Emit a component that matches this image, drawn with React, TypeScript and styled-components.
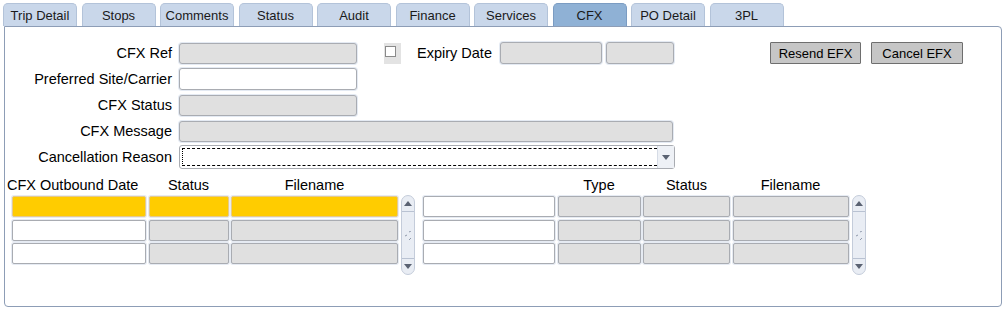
import { Fragment } from "react";
import styled, { createGlobalStyle } from "styled-components";

const GlobalStyle = createGlobalStyle`
  body {
    margin: 0;
    background: #ffffff;
    font-family: "Liberation Sans", Arial, sans-serif;
    color: #000;
  }
`;

const Page = styled.div`
  width: 1006px;
  height: 310px;
  padding-top: 3px;
  box-sizing: border-box;
`;

const TabBar = styled.div`
  display: flex;
  gap: 4.5px;
  padding-left: 3px;
  height: 23px;
`;

const Tab = styled.div<{ $active?: boolean }>`
  width: 74px;
  height: 23px;
  box-sizing: border-box;
  display: flex;
  align-items: center;
  justify-content: center;
  font-size: 13px;
  color: #1a1a1a;
  background: ${(p) => (p.$active ? "#8fb1d5" : "#c9d7ea")};
  border: 1px solid ${(p) => (p.$active ? "#7b9cc2" : "#b3c3d9")};
  border-bottom: none;
  border-radius: 5px 5px 0 0;
`;

const Panel = styled.div`
  margin-left: 4px;
  width: 998px;
  height: 281px;
  box-sizing: border-box;
  border: 1px solid #8d9db6;
  border-radius: 0 4px 4px 4px;
  padding-top: 15px;
`;

const Form = styled.div`
  display: flex;
  flex-direction: column;
  gap: 4px;
`;

const Row = styled.div`
  display: flex;
  align-items: center;
  height: 22px;
`;

const Label = styled.div`
  width: 167px;
  padding-right: 7px;
  text-align: right;
  font-size: 14.5px;
  white-space: nowrap;
`;

const Field = styled.div<{ $w: number; $gray?: boolean; $h?: number }>`
  width: ${(p) => p.$w}px;
  height: ${(p) => p.$h ?? 21}px;
  box-sizing: border-box;
  background: ${(p) => (p.$gray ? "#e0e0e0" : "#ffffff")};
  border: 1px solid #a9acb2;
  border-radius: 3px;
  box-shadow: 0 0 0 1px #e4eaf3;
  flex-shrink: 0;
`;

const CheckWrap = styled.div`
  margin-left: 27px;
  width: 17px;
  height: 21px;
  background: #e3e3e3;
  display: flex;
  align-items: flex-start;
  padding: 3px 0 0 1px;
  box-sizing: border-box;
`;

const CheckBox = styled.div`
  width: 11px;
  height: 11px;
  background: #fff;
  border: 1px solid #8a8a8a;
  box-sizing: border-box;
`;

const SideLabel = styled.div`
  margin-left: 16px;
  width: 83px;
  font-size: 14.5px;
`;

const Buttons = styled.div`
  margin-left: 96px;
  display: flex;
  gap: 10px;
`;

const Button = styled.div<{ $w: number }>`
  width: ${(p) => p.$w}px;
  height: 22px;
  box-sizing: border-box;
  background: #c6c6c6;
  border: 1px solid #6e6e6e;
  border-radius: 1px;
  display: flex;
  align-items: center;
  justify-content: center;
  font-size: 13px;
`;

const Select = styled.div`
  width: 496px;
  height: 24px;
  box-sizing: border-box;
  border: 1px solid #a9acb2;
  border-radius: 3px;
  background: #fff;
  display: flex;
  padding: 2px 0 2px 2px;
`;

const SelectFocus = styled.div`
  flex: 1;
  border: 1px dashed #000;
  border-width: 1px 0;
  border-left: 1px dotted #000;
`;

const SelectArrow = styled.div`
  width: 16px;
  margin: -2px 0;
  background: #eef1f6;
  border-left: 1px solid #d6dce6;
  display: flex;
  align-items: center;
  justify-content: center;
  svg {
    display: block;
  }
`;

const Tables = styled.div`
  display: flex;
  margin-top: 6px;
`;

const Block = styled.div<{ $left: number }>`
  margin-left: ${(p) => p.$left}px;
  display: flex;
  flex-direction: column;
`;

const HeaderRow = styled.div<{ $cols: string }>`
  display: grid;
  grid-template-columns: ${(p) => p.$cols};
  column-gap: 2.5px;
  font-size: 14.5px;
  height: 21px;
`;

const HeadCell = styled.div<{ $shift?: number }>`
  text-align: ${(p) => (p.$shift ? "left" : "center")};
  margin-left: ${(p) => p.$shift ?? 0}px;
  white-space: nowrap;
  line-height: 18px;
  padding-top: 2px;
`;

const Body = styled.div`
  display: flex;
  align-items: flex-start;
  gap: 3px;
`;

const Grid = styled.div<{ $cols: string }>`
  display: grid;
  grid-template-columns: ${(p) => p.$cols};
  align-content: start;
  column-gap: 2.5px;
  row-gap: 2.5px;
  padding-top: 1px;
`;

const Cell = styled.div<{ $kind: "white" | "gray" | "yellow" }>`
  height: 21px;
  box-sizing: border-box;
  border-radius: 2px;
  background: ${(p) =>
    p.$kind === "yellow" ? "#ffcc00" : p.$kind === "gray" ? "#e0e0e0" : "#ffffff"};
  border: 1px solid ${(p) => (p.$kind === "yellow" ? "#e6c98a" : "#a9acb2")};
  box-shadow: 0 0 0 1px #e6ebf3;
`;

const Scroll = styled.div`
  width: 14px;
  height: 80px;
  box-sizing: border-box;
  background: #e9edf4;
  border: 1px solid #c4ccda;
  border-radius: 7px;
  display: flex;
  flex-direction: column;
  justify-content: space-between;
  align-items: center;
`;

const ScrollBtn = styled.div<{ $down?: boolean }>`
  width: 12px;
  height: 16px;
  display: flex;
  align-items: center;
  justify-content: center;
  border-${(p) => (p.$down ? "top" : "bottom")}: 1px solid #b9c2d2;
  box-sizing: border-box;
`;

const Arrow = ({ up }: { up?: boolean }) => (
  <svg width="8" height="5" viewBox="0 0 8 5">
    <polygon points={up ? "0,5 8,5 4,0" : "0,0 8,0 4,5"} fill="#5a6272" />
  </svg>
);

const Grip = () => (
  <svg width="8" height="9" viewBox="0 0 8 9">
    <line x1="5" y1="1" x2="7" y2="0" stroke="#8e98aa" strokeWidth="1" />
    <line x1="1" y1="5" x2="3" y2="4" stroke="#8e98aa" strokeWidth="1" />
    <line x1="5" y1="9" x2="7" y2="7" stroke="#8e98aa" strokeWidth="1" />
  </svg>
);

const Scrollbar = () => (
  <Scroll>
    <ScrollBtn>
      <Arrow up />
    </ScrollBtn>
    <Grip />
    <ScrollBtn $down>
      <Arrow />
    </ScrollBtn>
  </Scroll>
);

const tabs = ["Trip Detail", "Stops", "Comments", "Status", "Audit", "Finance", "Services", "CFX", "PO Detail", "3PL"];

const leftCols = "134px 80px 167px";
const rightCols = "132px 83px 87px 116px";

const App = () => {
  return (
    <Page>
      <GlobalStyle />
      <TabBar>
        {tabs.map((t) => (
          <Tab key={t} $active={t === "CFX"}>
            {t}
          </Tab>
        ))}
      </TabBar>
      <Panel>
        <Form>
          <Row>
            <Label>CFX Ref</Label>
            <Field $w={178} $gray />
            <CheckWrap>
              <CheckBox />
            </CheckWrap>
            <SideLabel>Expiry Date</SideLabel>
            <Field $w={102} $gray $h={22} />
            <Field $w={68} $gray $h={22} style={{ marginLeft: 4 }} />
            <Buttons>
              <Button $w={91}>Resend EFX</Button>
              <Button $w={92}>Cancel EFX</Button>
            </Buttons>
          </Row>
          <Row>
            <Label>Preferred Site/Carrier</Label>
            <Field $w={178} $h={22} />
          </Row>
          <Row>
            <Label>CFX Status</Label>
            <Field $w={178} $gray />
          </Row>
          <Row>
            <Label>CFX Message</Label>
            <Field $w={494} $gray />
          </Row>
          <Row>
            <Label>Cancellation Reason</Label>
            <Select>
              <SelectFocus />
              <SelectArrow>
                <Arrow />
              </SelectArrow>
            </Select>
          </Row>
        </Form>
        <Tables>
          <Block $left={7}>
            <HeaderRow $cols={leftCols}>
              <HeadCell $shift={-5}>CFX Outbound Date</HeadCell>
              <HeadCell>Status</HeadCell>
              <HeadCell>Filename</HeadCell>
            </HeaderRow>
            <Body>
              <Grid $cols={leftCols}>
                {[0, 1, 2].map((r) => (
                  <Fragment key={r}>
                    <Cell $kind={r === 0 ? "yellow" : "white"} />
                    <Cell $kind={r === 0 ? "yellow" : "gray"} />
                    <Cell $kind={r === 0 ? "yellow" : "gray"} />
                  </Fragment>
                ))}
              </Grid>
              <Scrollbar />
            </Body>
          </Block>
          <Block $left={8}>
            <HeaderRow $cols={rightCols}>
              <HeadCell />
              <HeadCell>Type</HeadCell>
              <HeadCell>Status</HeadCell>
              <HeadCell>Filename</HeadCell>
            </HeaderRow>
            <Body>
              <Grid $cols={rightCols}>
                {[0, 1, 2].map((r) => (
                  <Fragment key={r}>
                    <Cell $kind="white" />
                    <Cell $kind="gray" />
                    <Cell $kind="gray" />
                    <Cell $kind="gray" />
                  </Fragment>
                ))}
              </Grid>
              <Scrollbar />
            </Body>
          </Block>
        </Tables>
      </Panel>
    </Page>
  );
};

export default App;
